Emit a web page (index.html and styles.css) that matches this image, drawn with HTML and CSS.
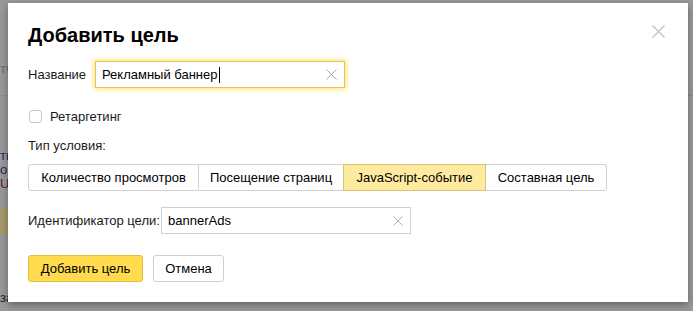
FILE: index.html
```html
<!DOCTYPE html>
<html lang="ru">
  <head>
    <meta charset="UTF-8" />
    <meta name="viewport" content="width=device-width, initial-scale=1.0" />
    <title>Добавить цель</title>
    <link rel="stylesheet" href="styles.css">
  </head>
  <body>
    <div class="page">
      <div class="page-line page-line-top"></div>
      <p class="frag frag-gray">тч</p>
      <p class="frag frag-blue">ть</p>
      <p class="frag frag-blue">о</p>
      <p class="frag frag-red">U</p>
      <div class="page-band"></div>
      <p class="frag frag-dark">за</p>
    </div>

    <div class="modal">
      <button class="close" type="button" aria-label="Закрыть">
        <svg width="13" height="13" viewBox="0 0 13 13">
          <path d="M0.5 0.5 L12.5 12.5 M12.5 0.5 L0.5 12.5" stroke="#c4c4c4" stroke-width="1.4" fill="none" />
        </svg>
      </button>

      <h1 class="title">Добавить цель</h1>

      <div class="row row-name">
        <label class="label" for="name">Название</label>
        <div class="input input-focused input-name">
          <span class="input-text">Рекламный баннер</span><span class="caret"></span>
          <svg class="clear" width="11" height="11" viewBox="0 0 11 11">
            <path d="M0.5 0.5 L10.5 10.5 M10.5 0.5 L0.5 10.5" stroke="#a8a8a8" stroke-width="1" fill="none" />
          </svg>
        </div>
      </div>

      <div class="row row-check">
        <span class="checkbox"></span>
        <span class="check-label">Ретаргетинг</span>
      </div>

      <p class="caption">Тип условия:</p>

      <div class="tabs">
        <span class="tab tab-views">Количество просмотров</span>
        <span class="tab tab-pages">Посещение страниц</span>
        <span class="tab tab-js active">JavaScript-событие</span>
        <span class="tab tab-comp">Составная цель</span>
      </div>

      <div class="row row-ident">
        <label class="label" for="ident">Идентификатор цели:</label>
        <div class="input input-ident">
          <span class="input-text">bannerAds</span>
          <svg class="clear" width="11" height="11" viewBox="0 0 11 11">
            <path d="M0.5 0.5 L10.5 10.5 M10.5 0.5 L0.5 10.5" stroke="#a8a8a8" stroke-width="1" fill="none" />
          </svg>
        </div>
      </div>

      <div class="actions">
        <button class="btn btn-action" type="button">Добавить цель</button>
        <button class="btn btn-cancel" type="button">Отмена</button>
      </div>
    </div>
  </body>
</html>
```

FILE: styles.css
```css
* {
  margin: 0;
  padding: 0;
  box-sizing: border-box;
  font-family: "Liberation Sans", Arial, sans-serif;
}

body {
  width: 693px;
  height: 311px;
  overflow: hidden;
  background: #999999;
  position: relative;
}

/* page under the overlay */
.page {
  width: 693px;
  height: 311px;
  padding-top: 62px;
  position: relative;
}

.page-line {
  height: 1px;
  background: #8c8c8c;
}

.page-line-top {
  position: absolute;
  top: 95px;
  left: 0;
  right: 0;
}

.frag {
  font-size: 13px;
  line-height: 14px;
  width: 20px;
}

.frag-gray {
  color: #6c6c6c;
  margin-bottom: 73px;
}

.frag-blue {
  color: #1d2a58;
}

.frag-red {
  color: #501c2a;
  margin-bottom: 18px;
}

.page-band {
  width: 20px;
  height: 25px;
  background: #a89a6c;
  margin-bottom: 57px;
}

.frag-dark {
  color: #222;
}

/* modal */
.modal {
  position: absolute;
  left: 8px;
  top: 3px;
  width: 680px;
  height: 299px;
  background: #fff;
  box-shadow: 0 3px 8px rgba(0, 0, 0, 0.35);
  padding: 20px 20px 0 20px;
  color: #000;
  font-size: 13px;
}

.close {
  position: absolute;
  top: 22px;
  right: 23px;
  width: 13px;
  height: 13px;
  border: none;
  background: none;
  display: flex;
}

.title {
  font-size: 20px;
  line-height: 24px;
  font-weight: bold;
  color: #000;
}

.row {
  display: flex;
  align-items: center;
}

.label {
  color: #1a1a1a;
  font-size: 13px;
}

.row-name {
  margin-top: 14px;
  height: 27px;
}

.row-name .label {
  width: 67px;
}

.input {
  height: 27px;
  border: 1px solid #cfcfcf;
  display: flex;
  align-items: center;
  padding-left: 6px;
  position: relative;
}

.input-text {
  font-size: 13px;
  color: #000;
}

.input-focused {
  border-color: #e4c55a;
  box-shadow: 0 0 5px 1px rgba(255, 214, 51, 0.75);
}

.input-name {
  width: 250px;
}

.caret {
  width: 1px;
  height: 16px;
  background: #000;
  margin-left: 1px;
}

.clear {
  position: absolute;
  right: 7px;
  top: 7px;
}

.input-ident .clear {
  right: 7px;
  top: 8px;
  width: 10px;
  height: 10px;
}

.row-check {
  margin-top: 21px;
  height: 14px;
}

.checkbox {
  width: 13px;
  height: 13px;
  border: 1px solid #c6c6c6;
  border-radius: 3px;
  margin-left: 1px;
  margin-right: 8px;
}

.check-label {
  color: #1a1a1a;
}

.caption {
  margin-top: 15px;
  line-height: 16px;
  color: #1a1a1a;
}

.tabs {
  margin-top: 10px;
  display: flex;
  height: 27px;
}

.tab {
  height: 27px;
  border: 1px solid #d2d2d2;
  border-left: none;
  display: flex;
  align-items: center;
  justify-content: center;
  color: #000;
  white-space: nowrap;
}

.tab-views {
  width: 171px;
  border-left: 1px solid #d2d2d2;
  border-radius: 3px 0 0 3px;
}

.tab-pages {
  width: 145px;
}

.tab-js {
  width: 142px;
}

.tab-comp {
  width: 121px;
  border-radius: 0 3px 3px 0;
}

.tab.active {
  background: #ffeba0;
  border-color: #d9c27a;
  border-left: 1px solid #d9c27a;
  margin-left: -1px;
  width: 143px;
}

.row-ident {
  margin-top: 16px;
  height: 27px;
}

.row-ident .label {
  width: 133px;
}

.input-ident {
  width: 250px;
}

.actions {
  margin-top: 21px;
  display: flex;
  gap: 10px;
}

.btn {
  height: 27px;
  font-size: 13px;
  border-radius: 3px;
  color: #000;
  padding: 0;
  white-space: nowrap;
}

.btn-action {
  width: 115px;
  background: #ffdb4d;
  border: 1px solid #e0c040;
}

.btn-cancel {
  width: 71px;
  background: #fff;
  border: 1px solid #cfcfcf;
}
```
